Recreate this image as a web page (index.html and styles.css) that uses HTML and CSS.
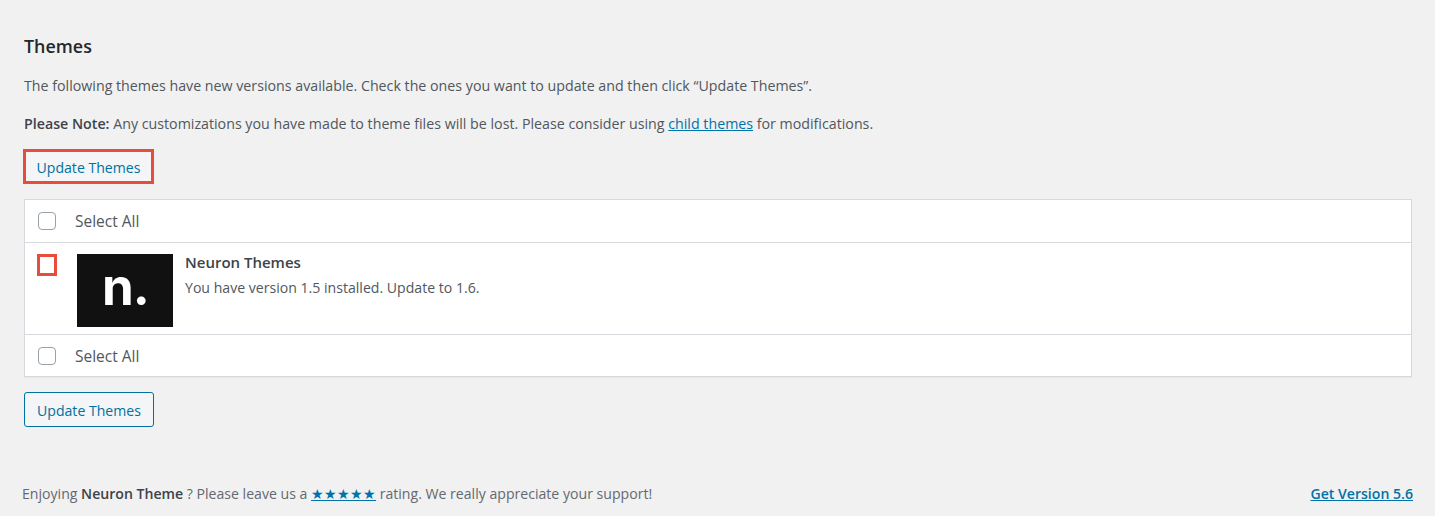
FILE: index.html
```html
<!DOCTYPE html>
<html lang="en">

<head>
  <meta charset="UTF-8" />
  <title>Themes</title>
  <link rel="stylesheet" href="styles.css">
</head>

<body>
  <div class="wrap">
    <h2>Themes</h2>
    <p class="intro">The following themes have new versions available. Check the ones you want to update and then click “Update Themes”.</p>
    <p class="note"><strong>Please Note:</strong> Any customizations you have made to theme files will be lost. Please consider using <a href="#">child themes</a> for modifications.</p>

    <form>
      <div class="marked">
        <button class="botao" type="button">Update Themes</button>
      </div>

      <div class="tabela">
        <div class="linha">
          <span class="caixa"></span>
          <label>Select All</label>
        </div>
        <div class="linha tema">
          <span class="caixa caixaMarcada"></span>
          <div class="logo">n.</div>
          <div class="info">
            <strong>Neuron Themes</strong>
            <span>You have version 1.5 installed. Update to 1.6.</span>
          </div>
        </div>
        <div class="linha">
          <span class="caixa"></span>
          <label>Select All</label>
        </div>
      </div>

      <button class="botao botaoBaixo" type="button">Update Themes</button>
    </form>
  </div>

  <footer>
    <span>Enjoying <strong>Neuron Theme</strong> ? Please leave us a <a href="#" class="estrelas">★★★★★</a> rating. We really appreciate your support!</span>
    <a href="#" class="versao">Get Version 5.6</a>
  </footer>
</body>

</html>
```

FILE: styles.css
```css
body {
  margin: 0;
  height: 516px;
  overflow: hidden;
  background-color: #f1f1f1;
  color: #50575e;
  font-family: "Open Sans", sans-serif;
  font-size: 14.23px;
}

a {
  color: #0073aa;
}

.wrap {
  padding: 35px 23px 0 24px;
}

h2 {
  margin: 0;
  font-size: 17.9px;
  line-height: 22px;
  font-weight: 600;
  color: #23282d;
}

p {
  margin: 0;
  line-height: 20px;
}

.intro {
  margin-top: 19px;
}

.note {
  margin-top: 18px;
}

strong {
  font-weight: 600;
  color: #3c434a;
}

.marked {
  display: inline-block;
  margin: 15px 0 0 -1px;
  border: 3px solid #e74c3c;
}

.botao {
  display: block;
  width: 125px;
  height: 29px;
  padding: 2px 0 0;
  border: 0;
  background-color: #f3f5f6;
  color: #0071a1;
  font-family: inherit;
  font-size: 14.1px;
}

.botaoBaixo {
  width: 130px;
  height: 35px;
  margin-top: 15px;
  border: 1px solid #0071a1;
  border-radius: 3px;
}

.tabela {
  margin-top: 15px;
  background-color: #fff;
  border: 1px solid #d5d8dc;
  box-shadow: 0 1px 1px rgba(0, 0, 0, 0.04);
}

.linha {
  display: flex;
  align-items: center;
  height: 42px;
  padding-left: 13px;
  font-size: 15.5px;
}

.linha:last-child {
  height: 41px;
}

.caixa {
  box-sizing: border-box;
  width: 18px;
  height: 18px;
  margin-right: 19px;
  background-color: #fff;
  border: 1px solid #9aa1a8;
  border-radius: 4px;
}

.tema {
  align-items: flex-start;
  height: 91px;
  border-top: 1px solid #d5d8dc;
  border-bottom: 1px solid #d5d8dc;
}

.caixaMarcada {
  width: 20px;
  height: 22px;
  margin: 11px 20px 0 -1px;
  border: 3px solid #e74c3c;
  border-radius: 0;
}

.logo {
  box-sizing: border-box;
  width: 96px;
  height: 73px;
  margin-top: 11px;
  padding-left: 1px;
  background-color: #111;
  color: #fff;
  font-family: Inter, sans-serif;
  font-size: 51px;
  font-weight: 700;
  letter-spacing: -1px;
  line-height: 66px;
  text-align: center;
}

.info {
  display: flex;
  flex-direction: column;
  gap: 6px;
  margin: 10px 0 0 12px;
  font-size: 14.1px;
  line-height: 19px;
}

.info strong {
  font-size: 15px;
}

footer {
  display: flex;
  justify-content: space-between;
  margin-top: 57px;
  padding: 0 22px;
  font-size: 14.1px;
  line-height: 20px;
  color: #646970;
}

.estrelas {
  color: #0073aa;
}

.versao {
  font-size: 14.1px;
  font-weight: 600;
}
```
